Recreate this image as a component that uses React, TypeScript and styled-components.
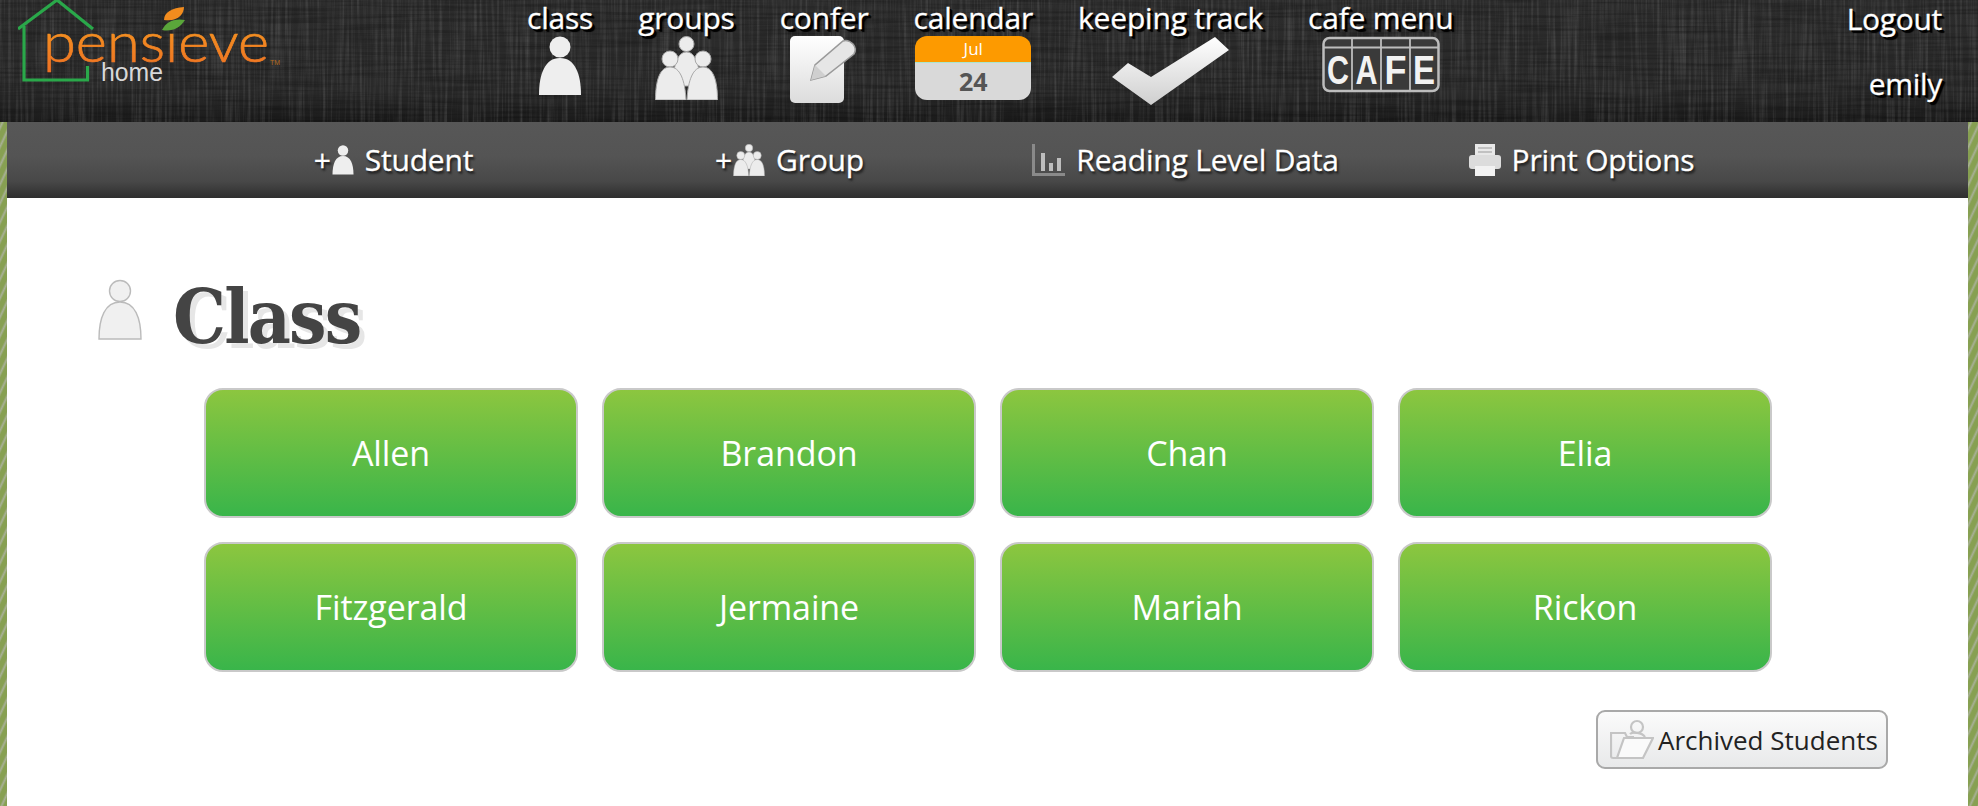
import React from "react";
import styled, { createGlobalStyle } from "styled-components";

const GlobalStyle = createGlobalStyle`
  html, body {
    margin: 0;
    height: 100%;
    overflow: hidden;
  }
  body {
    font-family: "Open Sans", "Liberation Sans", sans-serif;
    background: repeating-linear-gradient(
      115deg,
      #87a052 0px,
      #87a052 4px,
      #a8b096 6px,
      #87a052 8px
    );
  }
`;

const Page = styled.div`
  display: flex;
  flex-direction: column;
  height: 806px;
  overflow: hidden;
`;

const Header = styled.header`
  position: relative;
  display: flex;
  flex: 0 0 122px;
  height: 122px;
  box-sizing: border-box;
  padding: 0 36px 0 18px;
  background: linear-gradient(#2c2c2c 0%, #2a2a2a 75%, #1b1b1b 100%);
`;

// woven cloth look of the header, sits behind the nav
const Weave = styled.svg`
  position: absolute;
  inset: 0;
  width: 100%;
  height: 100%;
  pointer-events: none;
`;

const Logo = styled.svg`
  position: relative;
  flex: none;
  width: 270px;
  height: 90px;
  margin-right: 239px;
`;

const Nav = styled.nav`
  position: relative;
  display: flex;
  gap: 45px;
`;

const NavItem = styled.a`
  display: flex;
  flex-direction: column;
  align-items: center;
  color: #fff;
`;

const NavLabel = styled.span`
  height: 36px;
  font-size: 30px;
  line-height: 35px;
  letter-spacing: -0.2px;
  white-space: nowrap;
  -webkit-text-stroke: 0.3px #fff;
  text-shadow: 2px 2px 0 #000, 3px 3px 1px #000;
`;

const UserBlock = styled.div`
  position: relative;
  display: flex;
  flex-direction: column;
  align-items: flex-end;
  gap: 27px;
  margin-left: auto;
`;

const UserLine = styled.span`
  font-size: 30px;
  line-height: 38px;
  color: #fff;
  letter-spacing: -0.3px;
  -webkit-text-stroke: 0.3px #fff;
  text-shadow: 2px 2px 0 #000, 3px 3px 1px #000;
`;

const Calendar = styled.div`
  display: flex;
  flex-direction: column;
  width: 116px;
  height: 64px;
  border-radius: 12px;
  overflow: hidden;
  text-align: center;
`;

const CalendarMonth = styled.div`
  height: 26px;
  background: #fd9a00;
  border-bottom: 1px solid #a8e6cf;
  color: #fff;
  font-size: 17px;
  line-height: 26px;
`;

const CalendarDay = styled.div`
  flex: 1;
  background: #d9d9d9;
  color: #555;
  font-size: 25px;
  font-weight: 700;
  line-height: 37px;
`;

const Main = styled.main`
  display: flex;
  flex-direction: column;
  flex: 1;
  margin: 0 10px 0 7px;
  background: #fff;
`;

const SubBar = styled.div`
  display: grid;
  grid-template-columns: repeat(4, 396px);
  justify-content: center;
  flex: 0 0 76px;
  background: linear-gradient(#575757 0%, #545454 45%, #484848 78%, #2e2e2e 100%);
`;

const SubItem = styled.a`
  display: flex;
  align-items: center;
  justify-content: center;
  gap: 11px;
  padding-bottom: 1px;
  color: #fff;
  font-size: 30px;
  letter-spacing: -0.2px;
  -webkit-text-stroke: 0.3px #fff;
  text-shadow: 1px 2px 2px #222, 2px 3px 2px #333;
`;

const PlusIcon = styled.span`
  display: flex;
  align-items: center;
  gap: 1px;
`;

const TitleRow = styled.div`
  display: flex;
  align-items: flex-start;
  gap: 31px;
  padding: 81px 0 0 91px;
  height: 109px;
`;

const Title = styled.h1`
  margin: -12px 0 0;
  font-family: "DejaVu Serif Condensed", "DejaVu Serif", serif;
  font-size: 74px;
  line-height: 100px;
  font-weight: 700;
  color: #444;
  letter-spacing: -1.8px;
  text-shadow: 5px 5px 0 #e6e6e6;
`;

const StudentGrid = styled.div`
  display: grid;
  grid-template-columns: repeat(4, 374px);
  grid-auto-rows: 130px;
  gap: 24px;
  margin: 0 0 0 197px;
`;

const StudentButton = styled.a`
  display: flex;
  align-items: center;
  justify-content: center;
  box-sizing: border-box;
  border: 2px solid #c9c9c9;
  border-radius: 19px;
  background: linear-gradient(#8cc63f 0%, #39b54a 100%);
  color: #fff;
  font-size: 34px;
  letter-spacing: -0.1px;
`;

const Footer = styled.div`
  display: flex;
  justify-content: flex-end;
  padding: 38px 80px 0 0;
`;

const ArchiveButton = styled.a`
  display: flex;
  align-items: center;
  gap: 4px;
  box-sizing: border-box;
  width: 292px;
  height: 59px;
  padding: 0 0 0 12px;
  border: 2px solid #a9a9a9;
  border-radius: 9px;
  background: linear-gradient(#fbfbfb, #e8e9ea);
  color: #222;
  font-size: 26px;
  white-space: nowrap;
`;

const Person = ({
  width,
  height,
  fill = "#eeeeee",
  stroke = "none",
}: {
  width: number;
  height: number;
  fill?: string;
  stroke?: string;
}) => (
  <svg width={width} height={height} viewBox="0 0 44 60" fill={fill} stroke={stroke} strokeWidth={1.4}>
    <circle cx="22" cy="11" r="10.5" />
    <path d="M1 59 C1 38 7 22 22 22 C37 22 43 38 43 59 Z" />
  </svg>
);

const Group = ({ width, height }: { width: number; height: number }) => (
  <svg width={width} height={height} viewBox="0 0 63 64" fill="#ececec" stroke="#a8a8a8" strokeWidth={1}>
    <circle cx="31.5" cy="8" r="7.5" />
    <path d="M18 50 C18 28 23 16 31.5 16 C40 16 45 28 45 50 Z" />
    <circle cx="15" cy="23" r="8" />
    <path d="M0.5 64 C0.5 44 5 31 15 31 C25 31 30 44 31 64 Z" />
    <circle cx="48" cy="23" r="8" />
    <path d="M32 64 C33 44 38 31 48 31 C58 31 62.5 44 62.5 64 Z" />
  </svg>
);

const NotePencil = () => (
  <svg width="68" height="67" viewBox="0 0 68 67">
    <defs>
      <linearGradient id="noteFill" x1="0" y1="0" x2="0" y2="1">
        <stop offset="0" stopColor="#ffffff" />
        <stop offset="1" stopColor="#dcdcdc" />
      </linearGradient>
    </defs>
    <rect x="0" y="0" width="54" height="67" rx="5" fill="url(#noteFill)" />
    <path
      d="M21 44 L25 29 L53 5 Q58 3 63 8 Q67 13 64 18 L36 40 Z"
      fill="#e6e6e6"
      stroke="#9a9a9a"
      strokeWidth="1.5"
    />
    <path d="M21 44 L25 29 L36 40 Z" fill="#cfcfcf" />
  </svg>
);

const Check = () => (
  <svg width="117" height="69" viewBox="0 0 117 69">
    <defs>
      <linearGradient id="checkFill" x1="0" y1="0" x2="0" y2="1">
        <stop offset="0" stopColor="#ffffff" />
        <stop offset="1" stopColor="#cfcfcf" />
      </linearGradient>
    </defs>
    <polygon points="0,41 16,27 39,41 103,1 117,14 39,69" fill="url(#checkFill)" />
  </svg>
);

const Cafe = () => (
  <svg width="118" height="57" viewBox="0 0 118 56" fontFamily="Liberation Sans, sans-serif">
    <rect x="1.5" y="1.5" width="115" height="53" rx="6" fill="#3a3a3a" stroke="#bdbdbd" strokeWidth="2.5" />
    <path d="M2 11 H116 M30 2 V54 M59 2 V54 M88 2 V54" stroke="#bdbdbd" strokeWidth="1.8" />
    <g fill="#f2f2f2" fontSize="40" fontWeight="700" textAnchor="middle">
      <text x="16" y="47" textLength="22" lengthAdjust="spacingAndGlyphs">C</text>
      <text x="44.5" y="47" textLength="22" lengthAdjust="spacingAndGlyphs">A</text>
      <text x="73.5" y="47" textLength="22" lengthAdjust="spacingAndGlyphs">F</text>
      <text x="102" y="47" textLength="22" lengthAdjust="spacingAndGlyphs">E</text>
    </g>
  </svg>
);

const ChartIcon = () => (
  <svg width="33" height="32" viewBox="0 0 33 32" fill="#bdbdbd">
    <path d="M0 0 H3 V29 H33 V32 H0 Z" fill="#8a8a8a" />
    <rect x="9" y="9" width="4" height="18" />
    <rect x="17" y="19" width="4" height="8" />
    <rect x="25" y="14" width="4" height="13" />
  </svg>
);

const PrinterIcon = () => (
  <svg width="32" height="32" viewBox="0 0 32 32">
    <rect x="6" y="0" width="20" height="13" fill="#e8e8e8" />
    <path d="M9 4 H23 M9 8 H23" stroke="#b4b4b4" strokeWidth="1.4" />
    <rect x="0" y="11" width="32" height="14" rx="3" fill="#dcdcdc" />
    <rect x="6" y="22" width="20" height="10" fill="#f2f2f2" />
  </svg>
);

const ArchiveIcon = () => (
  <svg width="44" height="42" viewBox="0 0 44 42" fill="none" stroke="#c4c4c4" strokeWidth="2.2">
    <circle cx="27" cy="8" r="6" />
    <path d="M20 15 C22 13 32 13 35 18" />
    <path d="M9 39 H3 a2 2 0 0 1 -2 -2 V14 H15 l2 4 H24" />
    <path d="M14 19 H43 L33 39 H7 Z" fill="#fafafa" />
  </svg>
);

const HeaderWeave = () => (
  <Weave>
    <defs>
      <filter id="threadsV" x="0" y="0" width="100%" height="100%">
        <feTurbulence type="fractalNoise" baseFrequency="0.35 0.012" numOctaves="2" seed="4" />
        <feColorMatrix values="0 0 0 0 1  0 0 0 0 1  0 0 0 0 1  0.3 0 0 0 -0.13" />
      </filter>
      <filter id="threadsH" x="0" y="0" width="100%" height="100%">
        <feTurbulence type="fractalNoise" baseFrequency="0.012 0.35" numOctaves="2" seed="9" />
        <feColorMatrix values="0 0 0 0 0  0 0 0 0 0  0 0 0 0 0  0.6 0 0 0 -0.24" />
      </filter>
    </defs>
    <rect width="100%" height="100%" filter="url(#threadsV)" />
    <rect width="100%" height="100%" filter="url(#threadsH)" />
  </Weave>
);

const PensieveLogo = () => (
  <Logo viewBox="0 0 270 90">
    <defs>
      <linearGradient id="logoOrange" x1="0" y1="0" x2="0" y2="1">
        <stop offset="0" stopColor="#f7a11e" />
        <stop offset="1" stopColor="#ee6f24" />
      </linearGradient>
    </defs>
    <path d="M0 29 L39 0 L75 29" fill="none" stroke="#2aa84a" strokeWidth="3.2" />
    <path d="M6 26 V80 H69.5 V66" fill="none" stroke="#2aa84a" strokeWidth="3.2" />
    <text
      x="25"
      y="62"
      fontFamily="Lato, sans-serif"
      fontWeight="300"
      fontSize="56"
      fill="url(#logoOrange)"
      stroke="url(#logoOrange)"
      strokeWidth="0.7"
      textLength="226"
      lengthAdjust="spacingAndGlyphs"
    >
      pensieve
    </text>
    <text x="83" y="81" fontFamily="Liberation Sans, sans-serif" fontSize="25" fill="#d8d8d8" textLength="62" lengthAdjust="spacingAndGlyphs">
      home
    </text>
    <text x="252" y="65" fontFamily="Liberation Sans, sans-serif" fontSize="7" fill="#b06a20">
      TM
    </text>
    <path d="M146 20 C146 12 154 8 166 7 C166 14 160 22 146 20 Z" fill="#f28c1e" />
    <path d="M144 30 C148 22 156 18 167 20 C162 28 154 32 144 30 Z" fill="#5aa63a" />
  </Logo>
);

const navItems: { label: string; icon: React.ReactNode }[] = [
  { label: "class", icon: <Person width={44} height={60} /> },
  { label: "groups", icon: <Group width={63} height={64} /> },
  { label: "confer", icon: <NotePencil /> },
  {
    label: "calendar",
    icon: (
      <Calendar>
        <CalendarMonth>Jul</CalendarMonth>
        <CalendarDay>24</CalendarDay>
      </Calendar>
    ),
  },
  { label: "keeping track", icon: <Check /> },
  { label: "cafe menu", icon: <Cafe /> },
];

const students = ["Allen", "Brandon", "Chan", "Elia", "Fitzgerald", "Jermaine", "Mariah", "Rickon"];

const App = () => {
  return (
    <Page>
      <GlobalStyle />
      <Header>
        <HeaderWeave />
        <PensieveLogo />
        <Nav>
          {navItems.map((item) => (
            <NavItem key={item.label}>
              <NavLabel>{item.label}</NavLabel>
              {item.icon}
            </NavItem>
          ))}
        </Nav>
        <UserBlock>
          <UserLine>Logout</UserLine>
          <UserLine>emily</UserLine>
        </UserBlock>
      </Header>
      <Main>
        <SubBar>
          <SubItem>
            <PlusIcon>
              + <Person width={22} height={30} />
            </PlusIcon>
            Student
          </SubItem>
          <SubItem>
            <PlusIcon>
              + <Group width={32} height={32} />
            </PlusIcon>
            Group
          </SubItem>
          <SubItem>
            <ChartIcon />
            Reading Level Data
          </SubItem>
          <SubItem>
            <PrinterIcon />
            Print Options
          </SubItem>
        </SubBar>
        <TitleRow>
          <Person width={44} height={62} fill="#f0f0f0" stroke="#bbbbbb" />
          <Title>Class</Title>
        </TitleRow>
        <StudentGrid>
          {students.map((name) => (
            <StudentButton key={name}>{name}</StudentButton>
          ))}
        </StudentGrid>
        <Footer>
          <ArchiveButton>
            <ArchiveIcon />
            Archived Students
          </ArchiveButton>
        </Footer>
      </Main>
    </Page>
  );
};

export default App;
